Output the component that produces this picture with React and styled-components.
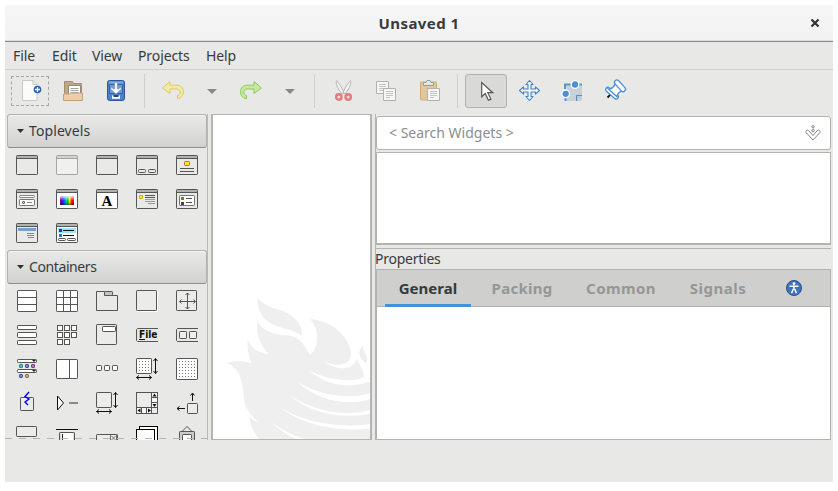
import React from "react";
import styled, { createGlobalStyle, css } from "styled-components";

const Global = createGlobalStyle`
  * { box-sizing: border-box; }
  body { margin: 0; background: #fff; font-family: "Noto Sans", "Open Sans", sans-serif; font-size: 14px; color: #363b3d; }
`;

const Window = styled.main`
  margin: 5px 0 0 5px;
  width: 828px;
  height: 477px;
  background: #e8e8e6;
  border-radius: 4px 4px 0 0;
  display: flex;
  flex-direction: column;
  overflow: hidden;
`;
const TitleBar = styled.header`
  flex: none;
  height: 37px;
  display: grid;
  grid-template-columns: 36px 1fr 36px;
  align-items: center;
  background: linear-gradient(#f6f6f6, #f2f2f2);
  border-bottom: 1px solid #8b8e88;
  box-shadow: inset 0 -1px #dcdcd9;
`;
const Title = styled.h1`
  margin: 0;
  grid-column: 2;
  text-align: center;
  font-size: 15px;
  font-weight: 700;
  line-height: 36px;
  letter-spacing: 0.45px;
`;
const CloseButton = styled.button`
  border: 0;
  padding: 0;
  background: none;
  display: grid;
  place-items: center;
  height: 36px;
`;
const MenuBar = styled.nav`
  flex: none;
  height: 28px;
  padding-left: 8px;
  display: flex;
  border-bottom: 1px solid #cfcfcc;
`;
const MenuItem = styled.span`
  width: ${(p) => p.$w}px;
  line-height: 28px;
  letter-spacing: -0.1px;
  white-space: nowrap;
`;
const ToolBar = styled.div`
  flex: none;
  height: 44px;
  padding: 4px 4px 6px;
  display: flex;
  gap: 1px;
`;
const ToolButton = styled.button`
  width: ${(p) => (p.$narrow ? 34 : 42)}px;
  height: 34px;
  padding: 0;
  background: none;
  border: 1px solid transparent;
  border-radius: 3px;
  display: grid;
  place-items: center;
  ${(p) => p.$active && css`background: #d9d9d7; border-color: #b2b2ae;`}
`;
const FocusRing = styled.span`
  width: 38px;
  height: 30px;
  border: 1px dashed #a5a5a2;
  border-radius: 1px;
  display: grid;
  place-items: center;
`;
const ToolSeparator = styled.i`
  width: 1px;
  margin: 0 6px;
  background: #cfcfcc;
`;
const Body = styled.section`
  flex: none;
  height: 326px;
  display: flex;
`;
const Palette = styled.aside`
  width: 203px;
  padding-left: 2px;
  border-right: 1px solid #b9b9b6;
  overflow: hidden;
  position: relative;
  &::after {
    content: "";
    position: absolute;
    left: 0; right: 0; bottom: 1px;
    height: 1px;
    background: repeating-linear-gradient(90deg, #b5b5b2 0 7px, transparent 7px 14px);
  }
`;
const GroupHeader = styled.button`
  display: flex;
  align-items: center;
  gap: 5px;
  width: 200px;
  height: 34px;
  padding: 0 0 1px 9px;
  border: 1px solid #b2b2ae;
  border-bottom-color: #8e8e8a;
  border-radius: 3px;
  background: linear-gradient(#e9e9e7, #d2d2d0);
  box-shadow: inset 0 1px #f4f4f3;
  font: inherit;
  color: inherit;
  letter-spacing: ${(p) => p.$track};
`;
const IconGrid = styled.div`
  display: grid;
  grid-template-columns: repeat(5, 40px);
  grid-auto-rows: 34px;
  place-items: center;
`;
const Canvas = styled.section`
  margin-left: 3px;
  width: 161px;
  background: #fff;
  border: 1px solid #b5b5b0;
  border-left-width: 2px;
  border-right-width: 2px;
  display: flex;
  align-items: flex-end;
  overflow: hidden;
`;
const Inspector = styled.section`
  margin-left: 3px;
  width: 457px;
  display: flex;
  flex-direction: column;
  padding-right: 1px;
  border-left: 1px solid #b5b5b0;
`;
const SearchField = styled.label`
  flex: none;
  margin-top: 2px;
  height: 34px;
  border: 1px solid #b3b3af;
  border-radius: 3px;
  background: #fff;
  display: flex;
  align-items: center;
  justify-content: space-between;
  padding: 0 9px 1px 12px;
  color: #8b8e8f;
  letter-spacing: 0;
`;
const TreeView = styled.div`
  flex: none;
  margin-top: 2px;
  height: 93px;
  background: #fff;
  border: 1px solid #b3b3af;
  border-bottom-width: 2px;
`;
const PropertiesLabel = styled.h2`
  flex: none;
  margin: 3px 0 0 -1px;
  height: 21px;
  border-top: 1px solid #b3b3af;
  font-size: 14px;
  font-weight: 400;
  line-height: 20px;
  letter-spacing: -0.25px;
`;
const TabStrip = styled.div`
  flex: none;
  height: 38px;
  border: 1px solid #b3b3af;
  background: #cfcfcd;
  display: flex;
  padding-left: 8px;
`;
const Tab = styled.button`
  width: ${(p) => p.$w}px;
  padding: 1px 0 0;
  margin-right: ${(p) => p.$gap || 0}px;
  border: 0;
  border-bottom: 3px solid ${(p) => (p.$active ? "#4a90d9" : "transparent")};
  margin-bottom: -1px;
  background: none;
  font: 700 15px "Noto Sans", sans-serif;
  letter-spacing: ${(p) => p.$track || "0.3px"};
  color: ${(p) => (p.$active ? "#363b3d" : "#959797")};
  display: grid;
  place-items: center;
`;
const TabPage = styled.div`
  flex: 1;
  background: #fff;
  border: 1px solid #b3b3af;
  border-top: 0;
`;
const Glyph = styled.svg`
  display: block;
  width: ${(p) => p.$w || 24}px;
  height: ${(p) => p.$h || 24}px;
  overflow: visible;
  flex: none;
`;

const S = "#555";
const Box = ({ x, y, w, h, f = "none", s = S, r = 0.7 }) => (
  <rect x={x + 0.5} y={y + 0.5} width={w - 1} height={h - 1} fill={f} stroke={s} rx={r} />
);
const Line = ({ d, s = S, w = 1 }) => <path d={d} fill="none" stroke={s} strokeWidth={w} />;
const Win = ({ fill = "#e9e9e8", s = S, bar = "#b1b1b0", children }) => (
  <>
    <Box x={1} y={2} w={22} h={20} f={fill} s={s} />
    <path d="M2 3h20v2H2z" fill={bar} />
    <Line d="M2 5.5h20" s={s} />
    {children}
  </>
);
const SizeArrows = () => (
  <Line s="#111" d="M20.5 1.5v15M18.5 4l2-2.5 2 2.5M18.5 14l2 2.500 2-2.500M1.500 20.500h15M4 18.500l-2.500 2 2.500 2M14 18.500l2.500 2-2.500 2" />
);
const Dots = ({ n }) => {
  const out = [];
  for (let i = 0; i < n; i++) for (let j = 0; j < n; j++) out.push(`M${4 + i * 3} ${4 + j * 3}h1v1h-1z`);
  return <path d={out.join("")} fill="#777" />;
};

const toplevels = [
  <Win />,
  <Win s="#a5a5a4" bar="#d2d2d1" fill="#f0f0ef" />,
  <Win />,
  <Win><Box x={3} y={16} w={8} h={4} r={1} /><Box x={13} y={16} w={8} h={4} r={1} /></Win>,
  <Win><Box x={9} y={8} w={6} h={5} f="#ffe22e" s="#d9690d" /><Line d="M5 15.500h14M5 18.500h14" /></Win>,
  <Win>
    <Box x={4} y={8} w={16} h={3} s="#888" f="#fff" /><Box x={4} y={12} w={16} h={7} s="#777" f="#fff" />
    <Box x={7} y={14} w={3} h={3} s="#333" /><Line d="M12 15.500h5" s="#888" />
  </Win>,
  <Win fill="#fff">
    <defs>
      <linearGradient id="hue">
        <stop offset="0" stopColor="#806" /><stop offset=".15" stopColor="#50f" /><stop offset=".3" stopColor="#05f" />
        <stop offset=".43" stopColor="#0cc" /><stop offset=".56" stopColor="#0c0" /><stop offset=".68" stopColor="#ee0" />
        <stop offset=".85" stopColor="#f00" /><stop offset="1" stopColor="#f06" />
      </linearGradient>
      <linearGradient id="lum" x2="0" y2="1">
        <stop offset="0" stopColor="#fff" stopOpacity=".85" /><stop offset=".5" stopColor="#fff" stopOpacity="0" />
        <stop offset=".6" stopOpacity="0" /><stop offset="1" stopOpacity=".45" />
      </linearGradient>
    </defs>
    <path d="M5 9h14v9H5z" fill="url(#hue)" /><path d="M5 9h14v9H5z" fill="url(#lum)" />
  </Win>,
  <Win fill="#fff"><text x="12" y="18.500" textAnchor="middle" fontFamily="Liberation Serif" fontWeight="700" fontSize="15">A</text></Win>,
  <Win>
    <Box x={4} y={8} w={4} h={4} s="#c4a000" f="#fce94f" />
    <Line d="M10 8.500h10M10 10.500h10" /><Line d="M10 12.500h10M10 14.500h10M13 16.500h7" s="#999" />
  </Win>,
  <Win>
    <Box x={4} y={8} w={16} h={11} s="#777" f="#fff" />
    <path d="M6 10h3v3H6z" fill="#4e9a06" /><path d="M6 15h3v3H6z" fill="#5c3566" /><Line d="M11 11.500h6M11 15.500h6" />
  </Win>,
  <Win><path d="M3 7h18v3H3z" fill="#729fcf" /><Line d="M12 12.500h7M12 14.500h7M13 16.500h6" s="#888" /></Win>,
  <Win fill="#fff">
    <path d="M3 7h18v5H3z" fill="#9be3f3" /><path d="M4 8h3v3H4z" fill="#5c1f99" /><path d="M4 13h3v3H4z" fill="#1483cf" />
    <Line d="M8 9.500h11M8 14.500h11" s="#111" /><Box x={3} y={17} w={8} h={3} /><Box x={12} y={17} w={9} h={3} />
  </Win>,
];

const containers = [
  <><Box x={2} y={1} w={20} h={22} f="#fff" /><Line d="M2 8.500h20M2 15.500h20" /></>,
  <><Box x={1} y={1} w={22} h={22} f="#fff" /><Line d="M1 8.500h22M1 15.500h22M8.500 1v22M15.500 1v22" /></>,
  <><path d="M1.500 2.500h8v4h13v15h-21z" fill="#e9e9e8" stroke={S} /><Box x={9} y={2} w={9} h={5} f="#c4c4c3" /></>,
  <><Box x={1} y={1} w={21} h={21} f="#ebebea" /><Line d="M22.500 2v20.500H2" s="#fff" /></>,
  <><Box x={1} y={1} w={21} h={21} f="#ebebea" /><Line d="M12.500 4v16M4.500 12.500h16M10.500 6l2-2 2 2M10.500 18l2 2 2-2M6.500 10.500l-2 2 2 2M18.500 10.500l2 2-2 2" /></>,
  <><Box x={2} y={2} w={20} h={5} f="#fff" /><Box x={2} y={9} w={20} h={6} f="#fff" /><Box x={2} y={17} w={20} h={5} f="#fff" /></>,
  <>{[[2, 2], [9, 2], [16, 2], [2, 9], [9, 9], [16, 9], [2, 16], [9, 16]].map(([x, y]) => <Box key={`${x}-${y}`} x={x} y={y} w={6} h={6} f="#fff" r={0} />)}</>,
  <><Box x={1} y={1} w={21} h={21} f="#ebebea" /><Box x={7} y={3} w={14} h={6} f="#fff" /></>,
  <>
    <Line d="M23 5.500H2.500l-1 1v11l1 1H23" />
    <text x="4" y="15" fontFamily="DejaVu Sans" fontWeight="700" fontSize="10" textLength="18.500" lengthAdjust="spacingAndGlyphs" fill="#111">File</text>
    <Line d="M4 16.500h6" s="#111" />
  </>,
  <><Line d="M23 5.500H2.500l-1 1v11l1 1H23" /><Box x={4} y={8} w={8} h={8} f="#eee" /><Box x={14} y={8} w={8} h={8} f="#eee" /></>,
  <>
    <Box x={2} y={2} w={20} h={4} f="#fff" /><Box x={2} y={12} w={20} h={4} f="#fff" />
    <path d="M17 3h4l-2 2zM17 13h4l-2 2z" fill="#222" />
    <Box x={4} y={7} w={4} h={4} s="#157f85" f="#5bb" /><Box x={10} y={7} w={4} h={4} s="#204a87" f="#88b" /><Box x={16} y={7} w={4} h={4} s="#75237f" f="#b7b" />
    <Box x={4} y={17} w={4} h={4} s="#2448a0" f="#88c" /><Box x={10} y={17} w={4} h={4} s="#82602b" f="#ca8" />
  </>,
  <><Box x={1} y={2} w={22} h={20} f="#fff" /><Line d="M14.500 2v20" /></>,
  <><Box x={1} y={8} w={6} h={6} f="#fff" /><Box x={9} y={8} w={6} h={6} f="#fff" /><Box x={17} y={8} w={6} h={6} f="#fff" /></>,
  <><Box x={1} y={1} w={16} h={16} f="#fff" /><Dots n={4} /><SizeArrows /></>,
  <><Box x={1} y={1} w={22} h={22} f="#fff" /><Dots n={6} /></>,
  <><Box x={5} y={6} w={14} h={14} f="#ebebea" /><Line d="M14 1l-4 4.500 4 2.500-4 3 3 3" s="#0000f0" w={1.4} /></>,
  <><path d="M2.500 5v14l6-7z" fill="#fff" stroke="#111" /><Line d="M14 12h9" s="#8a8a8a" w={2} /></>,
  <><Box x={1} y={1} w={16} h={16} f="#ebebea" /><SizeArrows /></>,
  <>
    <Box x={1} y={1} w={22} h={22} f="#ebebea" r={0} /><path d="M17 2h5v15h-5zM2 17h15v5H2z" fill="#f6f6f6" />
    <Line d="M16.500 1v22M1 16.500h22M17 6.500h5M17 11.500h5M6.500 17v5M11.500 17v5" />
    <path d="M17.500 5.500h4l-2-3zM17.500 13h4l-2 3zM5.500 17.500v4l-3-2zM13 17.500v4l3-2z" fill="#111" />
  </>,
  <><Box x={12} y={12} w={11} h={11} f="#ebebea" /><Line d="M17.500 2v8M15.500 4.500l2-2.500 2 2.500M2 17.500h8M4.500 15.500l-2.500 2 2.500 2" s="#111" /></>,
  <Box x={1} y={1} w={21} h={11} f="#ebebea" />,
  <><Line d="M1 4.500h22" s="#111" /><Box x={4} y={7} w={16} h={16} f="#ddd" /><Box x={6} y={8} w={12} h={14} s="#fff" f="#fff" /><Line d="M7.500 9v12" s="#222" /></>,
  <><Box x={1} y={9} w={22} h={14} f="#ebebea" /><Line d="M16.500 11l4 4M20.500 11l-4 4M21.500 10v5M15.500 10v5" s="#777" /></>,
  <><Box x={4} y={1} w={19} h={22} f="#fff" s="#000" r={0} /><Box x={1} y={4} w={19} h={20} f="#fff" s="#000" r={0} /></>,
  <><Line d="M6.500 7l5.500-5.500L17.500 7" /><Box x={4} y={6} w={16} h={18} f="#ccc" /><Box x={7} y={9} w={10} h={14} f="#fff" /></>,
];

const icons = {
  fresh: (
    <>
      <path d="M4.500 1.500H15l4 4v16H4.500z" fill="#fbfbfa" stroke="#c9c9c5" /><path d="M15 1.500v4h4" fill="#eee" stroke="#c3c3bf" />
      <circle cx="19.500" cy="10.500" r="3.800" fill="#2c5fa9" /><path d="M19.500 8v5M17 10.500h5" stroke="#fff" strokeWidth="1.300" />
    </>
  ),
  open: (
    <>
      <path d="M3.500 19V2.500h8l1 2h8V19z" fill="#c0a783" stroke="#a88f6a" />
      <path d="M7.500 6.500h12v12h-12z" fill="#fff" stroke="#8c8c88" /><Line d="M9.500 9.500h8M9.500 11.500h8M9.500 13.500h8" s="#a2a2a0" />
      <path d="M2.500 15h6l1.500-1h11.500v7.500h-19z" fill="#e9ceb0" stroke="#c6a27b" />
    </>
  ),
  save: (
    <>
      <rect x="3.500" y="1.500" width="17" height="20" rx="2" fill="#4d82c8" stroke="#2a569d" />
      <path d="M5.500 2.500h13l1 2h-15z" fill="#81abe1" /><rect x="5.500" y="5.500" width="13" height="9" fill="#6d9bd8" stroke="#3466ae" />
      <path d="M10.800 3.500h2.400v6.500h1.300l2-1.500.8 1.500L12 15l-5.300-5 .8-1.500 2 1.500h1.300z" fill="#fff" stroke="#8a9099" strokeWidth=".5" />
      <path d="M8 16.500h8v3.300H8z" fill="#fff" /><path d="M9.500 16h5v2h-5z" fill="#26456f" />
    </>
  ),
  undo: <path d="M1.500 9L9 2.500v3.700h7c4 0 6.500 3 6.500 6.500 0 3-2 6.500-6 7v-3.200c2-.6 2.700-1.800 2.700-3.500s-1.200-3-3.200-3H9v4.500z" fill="#f3eaa6" stroke="#dcc86c" strokeLinejoin="round" />,
  redo: <path d="M22.500 9L15 2.500v3.700H8c-4 0-6.500 3-6.500 6.500 0 3.500 2 6.500 6 7v-3.200c-2-.6-2.700-1.800-2.700-3.500s1.200-3 3.200-3h7v4.500z" fill="#c5e8a4" stroke="#8aca5c" strokeLinejoin="round" />,
  cut: (
    <>
      <path d="M5.500 1.500c-1 3 .5 7 5.500 13.500l2-1.500C10.500 8 8 4 5.500 1.500zM19.500 1.500c1 3-.5 7-5.500 13.500l-2-1.500c2.500-5.500 5-9.500 7.500-12z" fill="#f3f3f2" stroke="#aeb0ad" strokeWidth=".9" />
      <g fill="#f3d6d6" stroke="#df7d7d" strokeWidth="2.400"><circle cx="7.800" cy="18" r="2.700" /><circle cx="17.200" cy="18" r="2.700" /></g>
    </>
  ),
  copy: (
    <>
      <path d="M2.500 2.500h12v12h-12z" fill="#f7f7f6" stroke="#b1b2af" /><Line d="M5 5.500h7M5 7.500h7M5 9.500h7M5 11.500h4" s="#c5c5c3" />
      <path d="M9.500 9.500h12v12h-12z" fill="#f7f7f6" stroke="#b1b2af" /><Line d="M12 12.500h7M12 14.500h7M12 16.500h7M12 18.500h4" s="#c5c5c3" />
    </>
  ),
  paste: (
    <>
      <rect x="3.500" y="3" width="16" height="18" rx="1" fill="#e2c79c" stroke="#cdae7a" />
      <path d="M6.500 6.500v-3H9l1-2h3l1 2h2.500v3z" fill="#e6e6e4" stroke="#9c9e9a" />
      <path d="M10.500 9.500h12v12h-12z" fill="#f7f7f6" stroke="#b1b2af" /><Line d="M13 12.500h7M13 14.500h7M13 16.500h7M13 18.500h4" s="#c5c5c3" />
    </>
  ),
  pointer: <path d="M7.700 3.500v14.300l3.600-3.200 3.100 6.700 2.500-1.200-3.100-6.400h5z" fill="#fff" stroke="#555" strokeWidth="1.200" />,
  move: <path d="M12.500 1.500l3.600 4H14v4.500h4.500V7.900l4 3.600-4 3.600V13H14v4.500h2.100l-3.600 4-3.600-4H11V13H6.500v2.100l-4-3.600 4-3.600V10H11V5.500H8.900z" fill="#f2f6fa" stroke="#4283c4" strokeWidth="1.100" strokeLinejoin="round" />,
  resize: (
    <>
      <path d="M6 6h16v16H6z" fill="#c8d0da" /><path d="M16.500 22v-5.500H22" fill="#b4cbe4" stroke="#6687aa" />
      <Line d="M5 10.500v-5h6M19 5.500h3M5.500 19v3" s="#5b93cf" w={2} />
      <circle cx="15" cy="5.500" r="3.800" fill="#4a90d9" stroke="#fff" strokeWidth="1.300" /><circle cx="5.700" cy="14.800" r="3.800" fill="#4a90d9" stroke="#fff" strokeWidth="1.300" />
    </>
  ),
  pin: (
    <>
      <path d="M8 15l-3.500 3.500" stroke="#111" strokeWidth="1.800" />
      <g fill="#fff" stroke="#4a90d9" strokeWidth="1.300">
        <rect x="1.300" y="12" width="15.500" height="4.400" rx="2.200" transform="rotate(42 9 14.200)" />
        <path d="M5.200 9.800c3.300.2 6-1.700 6.800-5.300l7.500 7.300c-3.300.8-5.300 3-5.500 6z" />
        <rect x="10" y="4.400" width="14" height="4.800" rx="2.400" transform="rotate(48 17 6.800)" />
      </g>
    </>
  ),
};

const Tool = ({ name, active }) => (
  <ToolButton $active={active} aria-label={name}><Glyph viewBox="0 0 24 24">{icons[name]}</Glyph></ToolButton>
);
const Drop = () => (
  <ToolButton $narrow aria-label="history"><Glyph $w={10} $h={5} viewBox="0 0 10 5"><path d="M0 0h10L5 5z" fill="#858887" /></Glyph></ToolButton>
);
const Group = ({ label, track, items }) => (
  <>
    <GroupHeader $track={track}>
      <Glyph $w={7} $h={4} viewBox="0 0 7 4"><path d="M0 0h7L3.500 4z" fill="#2e3436" /></Glyph>
      {label}
    </GroupHeader>
    <IconGrid>{items.map((g, i) => <Glyph key={i} viewBox="0 0 24 24">{g}</Glyph>)}</IconGrid>
  </>
);

/* Flame emblem in the corner of the empty workspace. */
const Flame = () => (
  <Glyph $w={157} $h={159} viewBox="24 0 471 477">
    <g fill="#efefef">
      <path d="M156 53C173 72 198 82 224 90C262 103 293 128 291 168C280 159 262 152 244 147C200 135 158 118 156 53Z" />
      <path d="M314 117C390 122 437 180 438 222C438 258 395 261 359 245C390 269 440 277 456 236C466 262 477 270 477 290C450 310 370 300 314 273C370 320 440 325 490 305L495 309V340C430 360 340 345 278 306C340 365 430 378 495 358V390C410 415 310 385 247 341C320 405 410 415 495 402V433C390 445 290 425 219 379C300 440 400 455 495 446V477H300C260 465 225 447 198 423C220 447 245 465 272 477H163C148 460 135 440 134 410C142 417 150 424 159 427C120 385 118 375 115 335C109 290 100 262 65 249C85 242 110 243 140 249C130 230 127 205 127 177C140 205 158 219 191 222C165 195 154 165 157 125C180 158 210 163 245 166C300 172 300 214 317 224C345 195 342 145 314 117Z" />
      <path d="M473 195C460 212 456 230 483 250C494 228 474 220 473 195Z" />
    </g>
  </Glyph>
);

export default function App() {
  return (
    <>
      <Global />
      <Window>
        <TitleBar>
          <Title>Unsaved 1</Title>
          <CloseButton aria-label="Close">
            <Glyph $w={8} $h={8} viewBox="0 0 8 8"><path d="M.5.500l7 7M7.500.500l-7 7" stroke="#2e3436" strokeWidth="2.200" /></Glyph>
          </CloseButton>
        </TitleBar>
        <MenuBar>
          <MenuItem $w={39}>File</MenuItem>
          <MenuItem $w={40}>Edit</MenuItem>
          <MenuItem $w={46}>View</MenuItem>
          <MenuItem $w={68}>Projects</MenuItem>
          <MenuItem $w={40}>Help</MenuItem>
        </MenuBar>
        <ToolBar>
          <ToolButton aria-label="new"><FocusRing><Glyph viewBox="0 0 24 24">{icons.fresh}</Glyph></FocusRing></ToolButton>
          <Tool name="open" />
          <Tool name="save" />
          <ToolSeparator />
          <Tool name="undo" />
          <Drop />
          <Tool name="redo" />
          <Drop />
          <ToolSeparator />
          <Tool name="cut" />
          <Tool name="copy" />
          <Tool name="paste" />
          <ToolSeparator />
          <Tool name="pointer" active />
          <Tool name="move" />
          <Tool name="resize" />
          <Tool name="pin" />
        </ToolBar>
        <Body>
          <Palette>
            <Group label="Toplevels" track="0.1px" items={toplevels} />
            <Group label="Containers" track="-0.4px" items={containers} />
          </Palette>
          <Canvas><Flame /></Canvas>
          <Inspector>
            <SearchField>
              <span>&lt; Search Widgets &gt;</span>
              <Glyph $w={16} $h={16} viewBox="0 0 16 16">
                <g fill="#fff" stroke="#777" strokeWidth=".9">
                  <circle cx="8" cy="1.800" r="1.200" /><circle cx="8" cy="5.700" r="1.200" />
                  <path d="M1.500 5.500c1-.8 2-.2 2.500.5l4 4.500L12 6c.6-.8 1.600-1.300 2.500-.5s.8 1.700.2 2.400L8 15 1.300 7.900c-.6-.7-.6-1.600.2-2.400z" />
                </g>
              </Glyph>
            </SearchField>
            <TreeView />
            <PropertiesLabel>Properties</PropertiesLabel>
            <TabStrip>
              <Tab $w={86} $gap={8} $track="0.05px" $active>General</Tab>
              <Tab $w={86} $gap={8} $track="0.25px">Packing</Tab>
              <Tab $w={96} $gap={8} $track="0.400px">Common</Tab>
              <Tab $w={82} $gap={14} $track="0.500px">Signals</Tab>
              <Tab $w={42} aria-label="Accessibility">
                <Glyph $w={16} $h={16} viewBox="0 0 16 16">
                  <circle cx="8" cy="8" r="7.500" fill="#3f74bd" stroke="#244f8f" />
                  <circle cx="8" cy="3.700" r="1.400" fill="#fff" />
                  <path d="M3.500 6.200h9M8 6v3.500M7.300 9l-1.800 4.200M8.700 9l1.800 4.200" stroke="#fff" strokeWidth="1.500" fill="none" />
                </Glyph>
              </Tab>
            </TabStrip>
            <TabPage />
          </Inspector>
        </Body>
      </Window>
    </>
  );
}
